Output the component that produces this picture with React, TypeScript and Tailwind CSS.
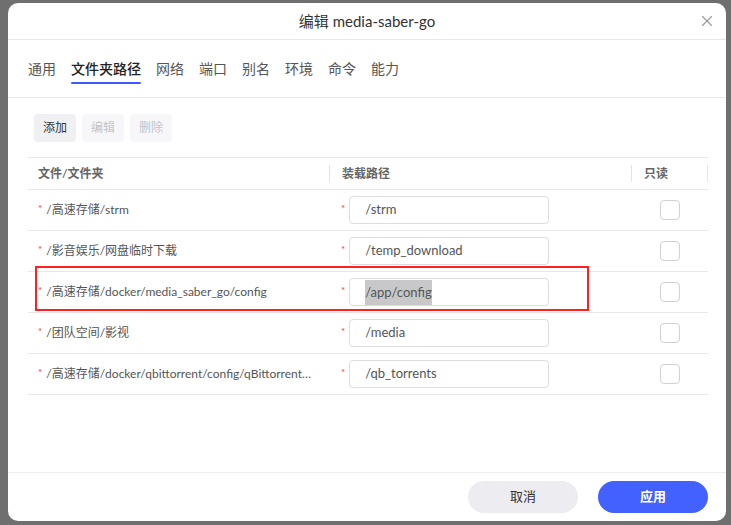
import React from 'react';
import { X } from 'lucide-react';

const tabs = ['通用', '文件夹路径', '网络', '端口', '别名', '环境', '命令', '能力'];

const rows = [
  { src: '/高速存储/strm', dst: '/strm' },
  { src: '/影音娱乐/网盘临时下载', dst: '/temp_download' },
  { src: '/高速存储/docker/media_saber_go/config', dst: '/app/config', selected: true },
  { src: '/团队空间/影视', dst: '/media' },
  { src: '/高速存储/docker/qbittorrent/config/qBittorrent/BT_backup', dst: '/qb_torrents' },
];

const font = { fontFamily: 'Lato, "Noto Sans CJK SC", sans-serif' };

export default function App() {
  return (
    <div className="w-[731px] h-[525px] bg-[#6f6f6f] pt-[3px] pl-[8px] overflow-hidden" style={font}>
      <div className="w-[718px] h-[518px] bg-white rounded-[10px] flex flex-col">
        {/* Header */}
        <div className="h-[37px] flex items-center justify-center relative border-b border-[#e8e8ec] shrink-0">
          <span className="text-[15px] text-[#333]">编辑 media-saber-go</span>
          <button className="absolute right-[10px] top-[9px] text-[#999]">
            <X className="w-[18px] h-[18px]" strokeWidth={1.5} />
          </button>
        </div>

        {/* Tabs */}
        <div className="h-[58px] flex items-center gap-[15px] px-5 pb-[2px] border-b border-[#e8e8ec] shrink-0">
          {tabs.map((t, i) => (
            <div key={t} className="relative">
              <span className={`text-[14px] ${i === 1 ? 'text-[#222] font-medium' : 'text-[#555]'}`}>{t}</span>
              {i === 1 && <div className="absolute left-0 right-0 -bottom-[4px] h-[2px] bg-[#3d5afe] rounded" />}
            </div>
          ))}
        </div>

        {/* Content */}
        <div className="flex-1 px-5 pt-[16px]">
          <div className="flex gap-[6px] pl-[6px]">
            <button className="w-[42px] h-[28px] rounded-[4px] bg-[#f0f0f3] text-[12px] text-[#333]">添加</button>
            <button className="w-[42px] h-[28px] rounded-[4px] bg-[#f7f7f9] text-[12px] text-[#c4c4c8]">编辑</button>
            <button className="w-[42px] h-[28px] rounded-[4px] bg-[#f7f7f9] text-[12px] text-[#c4c4c8]">删除</button>
          </div>

          <div className="mt-[15px] w-[680px] relative">
            <div className="grid grid-cols-[301px_302px_77px] h-[33px] items-center border-t border-b border-[#e8e8ec] text-[12px] font-semibold text-[#666]">
              <div className="pl-[10px]">文件/文件夹</div>
              <div className="pl-[12px] border-l border-[#e4e4e8] h-[17px] flex items-center">装载路径</div>
              <div className="pl-[12px] border-l border-r border-[#e4e4e8] h-[17px] flex items-center">只读</div>
            </div>
            {rows.map((r) => (
              <div key={r.dst} className="grid grid-cols-[301px_302px_77px] h-[41px] items-center border-b border-[#e8e8ec] text-[12px] text-[#555]">
                <div className="pl-[10px] flex items-center min-w-0 pr-[14px] overflow-hidden">
                  <span className="text-[#f04040] text-[10px] mr-[4px] -mt-[3px] shrink-0">*</span>
                  <span className="truncate">{r.src}</span>
                </div>
                <div className="flex items-center pl-[12px]">
                  <span className="text-[#f04040] text-[10px] mr-[4px] -mt-[3px]">*</span>
                  <div className="w-[200px] h-[28px] border border-[#dcdce2] rounded-[4px] flex items-center pl-[15px] text-[13px] text-[#555]">
                    <span className={r.selected ? 'bg-[#c8c8c8] leading-[25px]' : ''}>{r.dst}</span>
                  </div>
                </div>
                <div className="flex items-center pl-[29px]">
                  <div className="w-[20px] h-[20px] rounded-[4px] border border-[#d0d0d6]" />
                </div>
              </div>
            ))}
            {/* annotation box */}
            <div className="absolute left-[7px] top-[109px] w-[554px] h-[45px] border-2 border-[#ff2020] pointer-events-none" />
          </div>
        </div>

        {/* Footer */}
        <div className="h-[49px] border-t border-[#ececf0] flex items-center justify-end gap-[20px] pr-[18px] shrink-0">
          <button className="w-[110px] h-[32px] rounded-full bg-[#ececf1] text-[13px] text-[#333]">取消</button>
          <button className="w-[110px] h-[32px] rounded-full bg-[#4361ff] text-[13px] text-white font-semibold">应用</button>
        </div>
      </div>
    </div>
  );
}
